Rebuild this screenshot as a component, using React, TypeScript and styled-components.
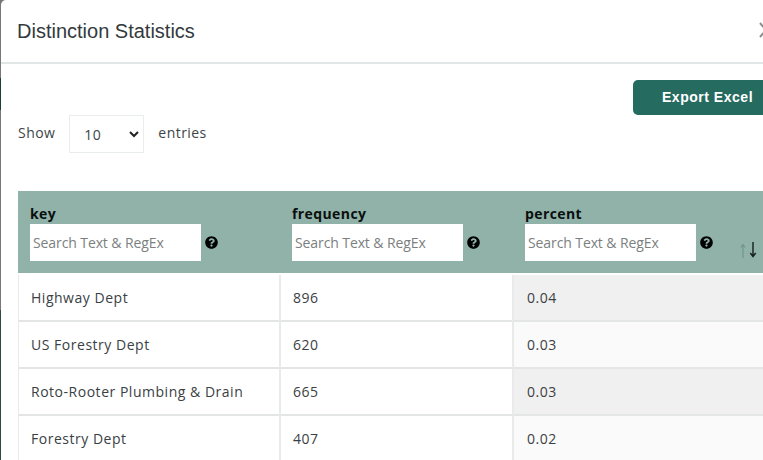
import React from "react";
import styled, { createGlobalStyle } from "styled-components";

const Global = createGlobalStyle`
  html, body { margin: 0; padding: 0; width: 763px; height: 460px; overflow: hidden; background: #fff; }
  #root { width: 763px; height: 460px; overflow: hidden; }
  * { box-sizing: border-box; }
`;

const Backdrop = styled.div`
  width: 763px;
  height: 460px;
  overflow: hidden;
  background: linear-gradient(#777 0 78px, #1d3d36 78px 110px, #777 110px 310px, #2f4a44 310px);
  padding-left: 1px;
`;

const Modal = styled.div`
  width: 800px;
  height: 460px;
  background: #fff;
  border-top-left-radius: 5px;
`;

const Header = styled.header`
  height: 64px;
  border-bottom: 2px solid #e3e6e6;
  display: flex;
  align-items: center;
  justify-content: space-between;
  padding: 0 23px 0 16px;
`;

const Title = styled.h4`
  margin: 0;
  font: 400 20px/30px "Liberation Sans", Arial, sans-serif;
  color: #333a3d;
`;

const Close = styled.span`
  color: #8d8d8d;
  width: 20px;
  height: 16px;
  display: block;
  margin-top: -3px;
`;

const Body = styled.div`
  padding: 16px 17px 0;
  font-family: "Open Sans", sans-serif;
`;

const ToolRow = styled.div`
  display: flex;
  justify-content: flex-end;
  height: 35px;
`;

const ExportButton = styled.button`
  width: 160px;
  height: 35px;
  margin-right: -9px;
  flex: none;
  border: 0;
  border-radius: 5px;
  background: #256b5f;
  color: #fff;
  font: 700 14px/35px "Liberation Sans", Arial, sans-serif;
  letter-spacing: 0.52px;
  text-align: left;
  padding: 0 0 2px 29px;
`;

const LengthRow = styled.div`
  display: flex;
  align-items: center;
  height: 38px;
  font-size: 14px;
  letter-spacing: 0.45px;
  color: #3d4447;
`;

const LengthLabel = styled.span`
  position: relative;
  top: -2px;
`;

const LengthSelect = styled.div`
  width: 75px;
  height: 38px;
  margin: 0 14px 0 14px;
  border: 1px solid #e9eded;
  background: #fff;
  display: flex;
  align-items: center;
  justify-content: space-between;
  padding: 1px 4px 0 14px;
`;

const TableGrid = styled.div`
  margin-top: 38px;
  width: 800px;
  display: grid;
  grid-template-columns: 262px 233px 305px;
`;

const HeadCell = styled.div`
  height: 82px;
  background: #90b2a9;
  padding: 14px 0 0 12px;
  position: relative;
  margin-bottom: 2px;
`;

const HeadLabel = styled.div`
  font-weight: 700;
  font-size: 14px;
  line-height: 18px;
  letter-spacing: 0.4px;
  color: #0b0f0e;
  margin-bottom: 1px;
`;

const SearchRow = styled.div`
  display: flex;
  align-items: center;
  gap: 4px;
`;

const SearchInput = styled.div`
  width: 171px;
  height: 37px;
  background: #fff;
  color: #7b7f80;
  font-size: 14px;
  letter-spacing: -0.1px;
  line-height: 37px;
  padding-left: 3px;
  white-space: nowrap;
`;

const HelpIcon = styled.svg`
  width: 13px;
  height: 13px;
`;

const SortIcon = styled.svg`
  position: absolute;
  left: 226px;
  top: 50px;
`;

const Cell = styled.div<{ $shade?: string }>`
  height: 47px;
  background: ${p => p.$shade || "#fff"};
  border-right: 1px solid #e9eaea;
  border-bottom: 2px solid #e4e6e6;
  border-left: 1px solid #e9eaea;
  font-size: 14px;
  letter-spacing: 0.52px;
  color: #3a4144;
  padding-left: ${p => (p.$shade ? 13 : 12)}px;
  line-height: 45px;
  white-space: nowrap;
`;

const Help = () => (
  <HelpIcon viewBox="0 0 512 512">
    <path fill="#000" d="M504 256c0 137-111 248-248 248S8 393 8 256 119 8 256 8s248 111 248 248zM263 90c-54 0-89 23-116 63-4 5-3 12 3 16l35 26c5 4 13 3 17-2 18-23 30-36 57-36 20 0 45 13 45 32 0 15-12 22-31 33-23 13-53 29-53 69v4c0 7 5 12 12 12h56c7 0 12-5 12-12v-1c0-28 82-29 82-105 0-57-59-99-119-99zm-7 244c-25 0-45 20-45 45s20 45 45 45 45-20 45-45-20-45-45-45z" />
  </HelpIcon>
);

const Header3 = ({ label, sort }: { label: string; sort?: boolean }) => (
  <HeadCell>
    <HeadLabel>{label}</HeadLabel>
    <SearchRow>
      <SearchInput>Search Text &amp; RegEx</SearchInput>
      <Help />
    </SearchRow>
    {sort && (
      <SortIcon width="18" height="18" viewBox="0 0 18 18" fill="none">
        <path d="M4 17V4M1.8 6.5 4 3.5l2.2 3" stroke="#6f958b" strokeWidth="1.1" />
        <path d="M14 1v14M11.3 12l2.7 3.5 2.7-3.5" stroke="#14201d" strokeWidth="1.4" />
      </SortIcon>
    )}
  </HeadCell>
);

const rows = [
  ["Highway Dept", "896", "0.04", "#f0f0f0"],
  ["US Forestry Dept", "620", "0.03", "#fafafa"],
  ["Roto-Rooter Plumbing & Drain", "665", "0.03", "#f0f0f0"],
  ["Forestry Dept", "407", "0.02", "#fafafa"],
];

export default function App() {
  return (
    <>
      <Global />
      <Backdrop>
        <Modal>
          <Header>
            <Title>Distinction Statistics</Title>
            <Close>
              <svg width="20" height="16" viewBox="0 0 20 16" fill="none">
                <path d="M2 1l12 14M14 1 2 15" stroke="#8d8d8d" strokeWidth="2" />
              </svg>
            </Close>
          </Header>
          <Body>
            <ToolRow>
              <ExportButton>Export Excel</ExportButton>
            </ToolRow>
            <LengthRow>
              <LengthLabel>Show</LengthLabel>
              <LengthSelect>
                10
                <svg width="10" height="7" viewBox="0 0 10 7" fill="none">
                  <path d="M1 1l4 4 4-4" stroke="#222" strokeWidth="2" />
                </svg>
              </LengthSelect>
              <LengthLabel>entries</LengthLabel>
            </LengthRow>
            <TableGrid>
              <Header3 label="key" />
              <Header3 label="frequency" />
              <Header3 label="percent" sort />
              {rows.map(r => (
                <React.Fragment key={r[0]}>
                  <Cell>{r[0]}</Cell>
                  <Cell>{r[1]}</Cell>
                  <Cell $shade={r[3]}>{r[2]}</Cell>
                </React.Fragment>
              ))}
            </TableGrid>
          </Body>
        </Modal>
      </Backdrop>
    </>
  );
}
